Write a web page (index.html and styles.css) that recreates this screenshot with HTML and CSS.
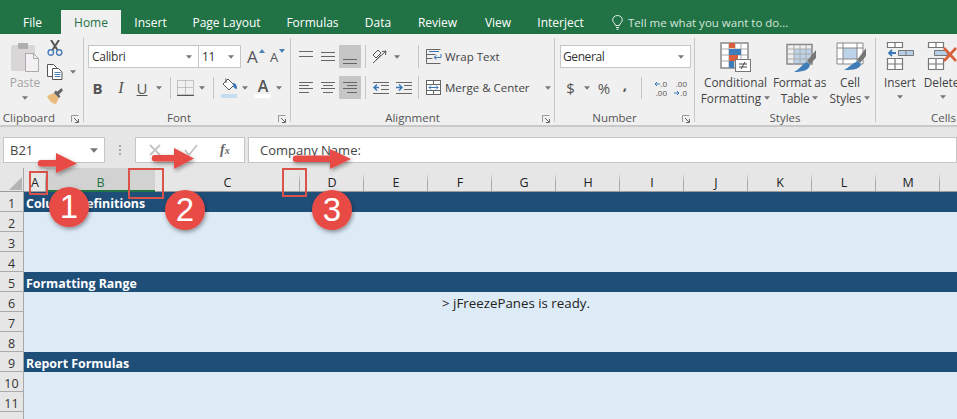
FILE: index.html
```html
<!DOCTYPE html>
<html lang="en">
<head>
<meta charset="utf-8">
<title>Excel</title>
<link rel="stylesheet" href="styles.css">
</head>
<body>
<svg class="defs" width="0" height="0">
  <symbol id="caret" viewBox="0 0 7 4"><path d="M0 0h7L3.500 4z" fill="#777"/></symbol>
  <symbol id="launch" viewBox="0 0 8 8"><path d="M0.500 7V0.500H7.500" fill="none" stroke="#999"/><path d="M3 3l4 4M7.500 4v3.500H4" fill="none" stroke="#666"/></symbol>
</svg>

<header class="titlebar">
  <nav class="tabs">
    <span class="tab t-file">File</span>
    <span class="tab t-home">Home</span>
    <span class="tab t-insert">Insert</span>
    <span class="tab t-page">Page Layout</span>
    <span class="tab t-form">Formulas</span>
    <span class="tab t-data">Data</span>
    <span class="tab t-review">Review</span>
    <span class="tab t-view">View</span>
    <span class="tab t-inter">Interject</span>
    <span class="tell">
      <svg width="11" height="15" viewBox="0 0 11 15"><path d="M3.500 10.500C3 8 .7 7.500 .7 4.800a4.800 4.300 0 0 1 9.600 0C10.300 7.500 8 8 7.500 10.500zM4 12.500h3M4.500 14.300h2" fill="none" stroke="#e4efe8"/></svg>
      <span>Tell me what you want to do...</span>
    </span>
  </nav>
</header>

<section class="ribbon">
  <div class="group g-clip">
    <div class="gbody clip-body">
      <div class="paste">
        <svg width="28" height="30" viewBox="0 0 28 30"><rect x="0" y="3" width="24" height="26" rx="2" fill="#d9d6d7"/><rect x="7" y="1" width="10" height="6" rx="1" fill="#b0adae"/><path d="M14.500 11.500h8l5 5v13h-13z" fill="#f4f1f5" stroke="#aaa"/><path d="M22.500 11.500v5h5" fill="none" stroke="#aaa"/></svg>
        <span class="paste-t">Paste</span>
        <svg class="caret-s" width="6" height="4"><use href="#caret"/></svg>
      </div>
      <div class="clip-tools">
        <svg width="16" height="16" viewBox="0 0 16 16"><path d="M4 0l6.500 10M12 0L5.500 10" stroke="#555" stroke-width="2" fill="none"/><circle cx="3.800" cy="12.500" r="2.700" fill="none" stroke="#4a7eb8" stroke-width="1.400"/><circle cx="12.200" cy="12.500" r="2.700" fill="none" stroke="#4a7eb8" stroke-width="1.400"/></svg>
        <div class="copy-row">
          <svg width="16" height="16" viewBox="0 0 16 16"><path d="M.5 .5h6l3 3v9h-9z" fill="#fff" stroke="#555"/><path d="M5.500 4.500h6l3.500 3.500v7.500H5.500z" fill="#fff" stroke="#555"/><path d="M7.500 8.500h6M7.500 10.500h6M7.500 12.500h6" stroke="#4a7eb8"/></svg>
          <svg width="6" height="4"><use href="#caret"/></svg>
        </div>
        <svg width="17" height="16" viewBox="0 0 17 16"><path d="M0 8l7-3 5 5-3 6C6 16 2 13 0 8z" fill="#e9bb7c"/><path d="M7 5l5 5 1.500-1.500-1.500-2 4-4-1.500-2.500-4 3.500-2-1z" fill="#666"/></svg>
      </div>
    </div>
    <div class="glabel"><i></i><span>Clipboard</span><svg width="8" height="8"><use href="#launch"/></svg></div>
  </div>

  <div class="group g-font">
    <div class="gbody">
      <div class="font-r1">
        <div class="combo c-font"><span class="cal">Calibri</span><svg width="6" height="4"><use href="#caret"/></svg></div>
        <div class="combo c-size"><span class="cal">11</span><svg width="6" height="4"><use href="#caret"/></svg></div>
        <div class="fsize f-grow"><span>A</span><svg width="6" height="4" viewBox="0 0 6 4"><path d="M3 0l3 4H0z" fill="#4a7eb8"/></svg></div>
        <div class="fsize f-shrink"><span>A</span><svg width="6" height="4" viewBox="0 0 6 4"><path d="M0 0h6L3 4z" fill="#4a7eb8"/></svg></div>
      </div>
      <div class="font-r2">
        <b class="fmt b">B</b>
        <i class="fmt i">I</i>
        <u class="fmt u">U</u>
        <svg class="mid" width="6" height="4"><use href="#caret"/></svg>
        <span class="vsep"></span>
        <svg class="mid" width="17" height="16" viewBox="0 0 17 16"><path d="M.5 .5h16v14H.5zM8.500 .5v14M.5 7.500h16" fill="none" stroke="#999" stroke-dasharray="1 1"/><path d="M0 15.500h17" stroke="#555"/></svg>
        <svg class="mid" width="6" height="4"><use href="#caret"/></svg>
        <span class="vsep"></span>
        <svg class="mid" width="17" height="20" viewBox="0 0 17 20"><path d="M7 1l6 6-5 5-6-6z" fill="#fff" stroke="#555"/><path d="M5 0.500V5" stroke="#555"/><path d="M12 5c3 0 4 3 4 6-2 0-3-1-4-3z" fill="#3a78b8"/><rect x="0" y="16" width="16" height="4" fill="#c6dcef"/></svg>
        <svg class="mid" width="6" height="4"><use href="#caret"/></svg>
        <span class="acolor">A</span>
        <svg class="mid" width="6" height="4"><use href="#caret"/></svg>
      </div>
    </div>
    <div class="glabel"><i></i><span>Font</span><svg width="8" height="8"><use href="#launch"/></svg></div>
  </div>

  <div class="group g-align">
    <div class="gbody">
      <div class="al-row al-r1">
        <span class="al"><svg width="14" height="7" viewBox="0 0 14 7" class="up"><path d="M0 .5h14M0 5.500h14" stroke="#666"/></svg></span>
        <span class="al"><svg width="14" height="9" viewBox="0 0 14 9"><path d="M0 .5h14M0 4.500h14M0 8.500h14" stroke="#666"/></svg></span>
        <span class="al sel"><svg width="14" height="9" viewBox="0 0 14 9" class="down"><path d="M0 4.500h14M0 8.500h14" stroke="#666"/></svg></span>
        <span class="alsep"></span>
        <span class="al"><svg width="18" height="17" viewBox="0 0 18 17"><path d="M1 15L14 3M14 3l-4 .5M14 3l-.5 4" fill="none" stroke="#555"/><path d="M1 7l5-5 3 3-5 5zM4 12l5-5" fill="none" stroke="#555"/></svg></span>
        <span class="al al-l"><svg width="6" height="4"><use href="#caret"/></svg></span>
        <span class="alsep"></span>
        <span class="wrap"><svg width="16" height="15" viewBox="0 0 16 15"><path d="M.5 .5h14M.5 5.500h9M.5 9.500h6M.5 14.500h14" stroke="#666"/><path d="M.5 .5v14" stroke="#666"/><path d="M3 2.500h10" stroke="#3a78b8"/><path d="M8 8.500h7V5M8 8.500l2.500-2M8 8.500l2.500 2" fill="none" stroke="#3a78b8"/></svg><span>Wrap Text</span></span>
      </div>
      <div class="al-row al-r2">
        <span class="al"><svg width="14" height="11" viewBox="0 0 14 11"><path d="M0 .5h14M0 3.500h10M0 6.500h14M0 10.500h10" stroke="#666"/></svg></span>
        <span class="al"><svg width="14" height="11" viewBox="0 0 14 11"><path d="M0 .5h14M2 3.500h10M0 6.500h14M2 10.500h10" stroke="#666"/></svg></span>
        <span class="al sel"><svg width="14" height="11" viewBox="0 0 14 11"><path d="M0 .5h14M4 3.500h10M0 6.500h14M4 10.500h10" stroke="#666"/></svg></span>
        <span class="alsep"></span>
        <span class="al"><svg width="16" height="12" viewBox="0 0 16 12"><path d="M0 .5h16M8 3.500h8M8 7.500h8M0 11.500h16" stroke="#666"/><path d="M6 5.500H1M4 2.500L1 5.500 4 8.500" fill="none" stroke="#3a78b8" stroke-width="1.500"/></svg></span>
        <span class="al"><svg width="16" height="12" viewBox="0 0 16 12"><path d="M0 .5h16M8 3.500h8M8 7.500h8M0 11.500h16" stroke="#666"/><path d="M0 5.500h6M3 2.500L6 5.500 3 8.500" fill="none" stroke="#3a78b8" stroke-width="1.500"/></svg></span>
        <span class="alsep"></span>
        <span class="wrap"><svg width="16" height="15" viewBox="0 0 16 15"><rect x=".5" y=".5" width="14" height="14" fill="#fff" stroke="#666"/><path d="M.5 4.500h14M.5 10.500h14M7.500 .5v4M7.500 10.500v4" stroke="#666"/><path d="M3 7.500h9M5 5.500l-2 2 2 2M10 5.500l2 2-2 2" fill="none" stroke="#3a78b8"/></svg><span>Merge &amp; Center</span><svg class="merge-c" width="6" height="4"><use href="#caret"/></svg></span>
      </div>
    </div>
    <div class="glabel"><i></i><span>Alignment</span><svg width="8" height="8"><use href="#launch"/></svg></div>
  </div>

  <div class="group g-num">
    <div class="gbody">
      <div class="combo c-gen"><span>General</span><svg width="6" height="4"><use href="#caret"/></svg></div>
      <div class="num-r2">
        <span class="sym">$</span>
        <svg class="mid" width="6" height="4"><use href="#caret"/></svg>
        <span class="sym">%</span>
        <span class="sym comma">,</span>
        <span class="vsep"></span>
        <span class="dec"><span class="dl"><svg width="6" height="6" viewBox="0 0 6 6"><path d="M6 3H1M3 1L1 3l2 2" fill="none" stroke="#3a78b8"/></svg><span>.0</span></span><span class="dl">.00</span></span>
        <span class="dec"><span class="dl">.00</span><span class="dl"><svg width="6" height="6" viewBox="0 0 6 6"><path d="M0 3h5M3 1l2 2-2 2" fill="none" stroke="#3a78b8"/></svg><span>.0</span></span></span>
      </div>
    </div>
    <div class="glabel"><i></i><span>Number</span><svg width="8" height="8"><use href="#launch"/></svg></div>
  </div>

  <div class="group g-styles">
    <div class="gbody big-row">
      <div class="big b-cond">
        <svg width="32" height="30" viewBox="0 0 32 30">
          <path d="M1 1h27v25H1z" fill="#fff" stroke="#888" stroke-width="1.500"/>
          <path d="M9 1v25M15 1v25M21 1v25M1 7h27M1 13h27M1 19h27" stroke="#aaa"/>
          <rect x="9" y="1" width="6" height="5" fill="#d9603b"/><rect x="9" y="7" width="12" height="6" fill="#3f7cb8"/><rect x="9" y="13" width="9" height="6" fill="#d9603b"/><rect x="9" y="19" width="5" height="7" fill="#3f7cb8"/>
          <rect x="15.500" y="17.500" width="15" height="12" fill="#fff" stroke="#777"/>
          <path d="M19 22h8M19 25h8M25 20l-4 7" stroke="#444"/>
        </svg>
        <span>Conditional</span>
        <span>Formatting <svg width="6" height="4"><use href="#caret"/></svg></span>
      </div>
      <div class="big b-table">
        <svg width="34" height="30" viewBox="0 0 34 30">
          <rect x="11" y="7" width="18" height="15" fill="#bcd2e8"/>
          <path d="M4 2.500h25v19.500H4z" fill="none" stroke="#888" stroke-width="1.500"/>
          <path d="M4 7h25M4 12h25M4 17h25M11 2.500V22M17 2.500V22M23 2.500V22" stroke="#aaa"/>
          <path d="M33 8v8l-6 6-3-3z" fill="#777"/>
          <path d="M24 20l3 3c-1 5-7 7-16 7 5-2 7-7 13-10z" fill="#3f7cb8"/>
        </svg>
        <span>Format as</span>
        <span>Table <svg width="6" height="4"><use href="#caret"/></svg></span>
      </div>
      <div class="big b-cell">
        <svg width="34" height="30" viewBox="0 0 34 30">
          <rect x="4" y="1" width="26" height="21" fill="#fff"/>
          <rect x="10" y="6" width="14" height="11" fill="#bcd2e8"/>
          <path d="M4 1h26v21H4zM4 6h26M4 17h26M10 1v21M24 1v21" fill="none" stroke="#888"/>
          <path d="M33 6v8l-6 7-3-3z" fill="#777"/>
          <path d="M25 19l3 3c-1 5-7 6-17 6 5-2 8-7 14-9z" fill="#3f7cb8"/>
        </svg>
        <span>Cell</span>
        <span>Styles <svg width="6" height="4"><use href="#caret"/></svg></span>
      </div>
    </div>
    <div class="glabel glabel-plain"><span>Styles</span></div>
  </div>

  <div class="group g-cells">
    <div class="gbody big-row">
      <div class="big b-ins">
        <svg width="30" height="30" viewBox="0 0 30 30">
          <path d="M2.500 .5h15v5h-15zM10 .5v5M2.500 16.500h15v11h-15zM2.500 22h15M10 16.500v11" fill="#fff" stroke="#777" stroke-width="1.200"/>
          <path d="M13.500 8.500h15v5h-15zM21 8.500v5" fill="#b7cfe6" stroke="#777"/>
          <path d="M11 11H4M7 8l-3 3 3 3" fill="none" stroke="#3a78b8" stroke-width="1.800"/>
        </svg>
        <span>Insert</span>
        <svg class="caret-s" width="6" height="4"><use href="#caret"/></svg>
      </div>
      <div class="big b-del">
        <svg width="34" height="30" viewBox="0 0 34 30">
          <path d="M1.500 .5h15v5h-15zM9 .5v5M1.500 16.500h15v11h-15zM1.500 22h15M9 16.500v11" fill="#fff" stroke="#777" stroke-width="1.200"/>
          <path d="M7.500 8.500h13v5h-13z" fill="#b7cfe6" stroke="#777"/>
          <path d="M17 6l12 13M29 6L17 19" stroke="#d9603b" stroke-width="2.600"/>
        </svg>
        <span>Delete</span>
        <svg class="caret-s" width="6" height="4"><use href="#caret"/></svg>
      </div>
    </div>
    <div class="glabel glabel-cells"><span>Cells</span></div>
  </div>
</section>

<section class="formula">
  <div class="namebox"><span>B21</span><svg width="8" height="5"><use href="#caret"/></svg></div>
  <div class="dots"><i></i><i></i><i></i></div>
  <div class="fxbox">
    <svg width="14" height="12" viewBox="0 0 14 12"><path d="M2 1l10 10M12 1L2 11" stroke="#c4c4c4" stroke-width="1.800"/></svg>
    <svg width="14" height="12" viewBox="0 0 14 12"><path d="M1 6l4 5 8-10" fill="none" stroke="#c4c4c4" stroke-width="1.800"/></svg>
    <span class="fx">f<small>x</small></span>
  </div>
  <div class="input">Company Name:</div>
</section>

<main class="sheet">
  <div class="colhead">
    <div class="corner"><svg width="13" height="13" viewBox="0 0 13 13"><path d="M13 0v13H0z" fill="#b4b4b4"/></svg></div>
    <div class="ch w-a">A</div>
    <div class="ch w-b on">B</div>
    <div class="ch w-c">C</div>
    <div class="ch">D</div><div class="ch">E</div><div class="ch">F</div><div class="ch">G</div><div class="ch">H</div>
    <div class="ch">I</div><div class="ch">J</div><div class="ch">K</div><div class="ch">L</div><div class="ch">M</div>
  </div>
  <div class="row band"><div class="rh">1</div><div class="cell">Column Definitions</div></div>
  <div class="row"><div class="rh">2</div><div class="cell"></div></div>
  <div class="row"><div class="rh">3</div><div class="cell"></div></div>
  <div class="row"><div class="rh">4</div><div class="cell"></div></div>
  <div class="row band"><div class="rh">5</div><div class="cell">Formatting Range</div></div>
  <div class="row"><div class="rh">6</div><div class="cell center">&gt; jFreezePanes is ready.</div></div>
  <div class="row"><div class="rh">7</div><div class="cell"></div></div>
  <div class="row"><div class="rh">8</div><div class="cell"></div></div>
  <div class="row band"><div class="rh">9</div><div class="cell">Report Formulas</div></div>
  <div class="row"><div class="rh">10</div><div class="cell"></div></div>
  <div class="row"><div class="rh">11</div><div class="cell"></div></div>
  <div class="row"><div class="rh"></div><div class="cell"></div></div>
</main>

<svg class="notes" width="957" height="419" viewBox="0 0 957 419">
  <defs><filter id="sh" x="-30%" y="-30%" width="170%" height="170%"><feDropShadow dx="1" dy="2" stdDeviation="2" flood-color="#000" flood-opacity=".4"/></filter></defs>
  <g fill="none" stroke="#d9534a" stroke-width="2">
    <rect x="30" y="172" width="17" height="22"/>
    <rect x="129" y="169" width="34" height="29"/>
    <rect x="283" y="169" width="23" height="27"/>
  </g>
  <g fill="#e84b45" filter="url(#sh)">
    <path d="M41 160H56V153L77 163.500 56 173V166.500H41a3.200 3.200 0 0 1 0-6.500z"/>
    <path d="M155 155H174V148L194 158.500 174 169V161.500H155a3.200 3.200 0 0 1 0-6.500z"/>
    <path d="M296 155.500H330V149L351 159 330 169V162H296a3.200 3.200 0 0 1 0-6.500z"/>
    <circle cx="69" cy="207" r="20"/>
    <circle cx="185" cy="210" r="20"/>
    <circle cx="332" cy="210" r="20"/>
  </g>
</svg>
<div class="num n1">1</div>
<div class="num n2">2</div>
<div class="num n3">3</div>
</body>
</html>
```
FILE: styles.css
```css
* { box-sizing: border-box; }
html, body { margin: 0; padding: 0; }
body {
  width: 957px; height: 419px; overflow: hidden; position: relative;
  font-family: "Open Sans", "Noto Sans", sans-serif; font-size: 12px; color: #444; background: #ddebf7;
}
svg { display: block; flex: none; }
.defs { position: absolute; }

/* title bar */
.titlebar { height: 34px; background: #217346; padding-top: 10px; }
.tabs { display: grid; height: 24px; grid-template-columns: 61px 60px 59px 93px 79px 52px 67px 54px 71px 1fr; }
.tab { color: #fff; text-align: center; line-height: 25px; font-size: 12px; }
.t-file { padding-left: 4px; }
.t-home { background: #f0f0f0; color: #217346; }
.tell { display: flex; align-items: center; gap: 5px; padding-left: 16px; color: #d6e6dc; font-size: 11.500px; }

/* ribbon */
.ribbon { display: flex; height: 93px; padding-top: 4px; background: #f0f0f0; border-bottom: 2px solid #c9c9c9; overflow: hidden; }
.group { height: 84px; flex: none; border-right: 1px solid #c6c6c6; display: flex; flex-direction: column; }
.g-clip { width: 84px; }
.g-font { width: 207px; padding-left: 4px; }
.g-align { width: 264px; }
.g-num { width: 140px; }
.g-styles { width: 181px; }
.g-cells { width: 81px; border-right: 0; }
.gbody { height: 72px; flex: none; }
.glabel { height: 12px; flex: none; margin-top: 2px; font-size: 11.500px; line-height: 12px; color: #555; display: grid; grid-template-columns: 1fr auto 1fr; align-items: center; padding-right: 4px; }
.glabel span { white-space: nowrap; margin-right: 16px; }
.glabel svg { justify-self: end; margin-top: 1px; }
.glabel i { display: block; }
.glabel-plain { grid-template-columns: 1fr; justify-items: center; padding-right: 0; }
.glabel-plain span { margin-right: 0; }
.glabel-cells { grid-template-columns: 1fr; justify-items: start; padding-left: 55px; }

/* clipboard */
.clip-body { display: flex; }
.paste { width: 47px; padding-left: 3px; padding-top: 4px; display: flex; flex-direction: column; align-items: center; }
.paste-t { line-height: 16px; margin-top: 3px; color: #a3a3a3; font-size: 12px; }
.caret-s { margin-top: 5px; }
.clip-tools { display: flex; flex-direction: column; gap: 8px; padding-top: 2px; }
.copy-row { display: flex; align-items: center; gap: 7px; height: 16px; }

/* font */
.font-r1 { display: flex; align-items: center; margin-top: 7px; height: 23px; }
.combo { display: flex; align-items: center; justify-content: space-between; height: 23px; background: #fff; border: 1px solid #c6c6c6; padding: 0 6px 0 3px; color: #333; }
.cal { font-size: 12px; letter-spacing: -.3px; }
.c-font { width: 111px; }
.c-size { width: 43px; margin-left: -1px; }
.fsize { display: flex; align-items: flex-start; height: 23px; color: #555; font-size: 17px; line-height: 23px; }
.fsize svg { margin-top: 4px; margin-left: 1px; }
.f-grow { margin-left: 6px; width: 21px; }
.f-shrink { margin-left: 2px; font-size: 13px; line-height: 25px; }
.font-r2 { display: grid; grid-template-columns: 19px 28px 14px 20px 3px 26px 8px 14px 18px 14px 22px 10px; height: 20px; margin-top: 9px; align-items: center; justify-items: center; }
.fmt { font-size: 15px; line-height: 20px; color: #555; }
.fmt.i { font-family: "Liberation Serif", serif; font-size: 16px; }
.vsep { width: 1px; height: 22px; background: #c6c6c6; }
.acolor { font-size: 16px; font-weight: 600; color: #555; line-height: 16px; width: 16px; text-align: center; background: linear-gradient(#f0f0f0 16px, #fff 16px); height: 20px; }

/* alignment */
.al-row { display: grid; grid-template-columns: 22px 22px 22px 8px 23px 23px 6px 1fr; align-items: center; margin-left: 4px; }
.al-r1 { margin-top: 7px; height: 23px; }
.al-r2 { margin-top: 8px; height: 23px; }
.al { height: 23px; display: flex; align-items: center; justify-content: center; }
.al-l { justify-content: flex-start; padding-left: 2px; }
.al.sel { background: #c6c6c6; }
.up { margin-bottom: 5px; }
.down { margin-top: 6px; }
.alsep { width: 1px; height: 23px; background: #c6c6c6; justify-self: center; }
.wrap { display: flex; align-items: center; gap: 3px; padding-left: 5px; white-space: nowrap; color: #444; font-size: 11.500px; }
.merge-c { margin-left: 12px; }

/* number */
.c-gen { width: 131px; margin: 7px 0 0 5px; padding-left: 2px; letter-spacing: -.4px; }
.num-r2 { display: grid; grid-template-columns: 21px 11px 24px 18px 14px 22px 18px; margin: 8px 0 0 5px; height: 23px; align-items: center; justify-items: center; }
.sym { font-size: 15px; color: #555; line-height: 23px; }
.comma { font-weight: 700; line-height: 16px; margin-bottom: 8px; }
.dec { display: flex; flex-direction: column; gap: 1px; font-size: 8px; line-height: 8px; color: #555; width: 16px; }
.dl { display: flex; align-items: center; justify-content: flex-end; }

/* styles + cells */
.big-row { display: flex; }
.big { display: flex; flex-direction: column; align-items: center; padding-top: 4px; line-height: 16px; white-space: nowrap; color: #444; font-size: 11.800px; }
.big svg:first-child { margin-bottom: 2px; }
.big span svg { display: inline-block; vertical-align: 1px; }
.b-cond { width: 67px; margin-left: 7px; }
.b-table { width: 59px; margin-left: 1px; letter-spacing: -.2px; }
.b-cell { width: 40px; margin-left: 1px; }
.b-ins { width: 33px; margin-left: 8px; }
.b-del { width: 40px; margin-left: 8px; align-items: flex-start; }
.b-del .caret-s { margin-left: 16px; }
.b-del svg:first-child { margin-left: 3px; }

/* formula bar */
.formula { height: 41px; display: flex; padding: 10px 0 5px 3px; background: #e6e6e6; }
.namebox, .fxbox, .input { height: 26px; background: #fff; border: 1px solid #c6c6c6; display: flex; align-items: center; color: #444; font-size: 13px; }
.namebox { width: 102px; justify-content: space-between; padding: 0 6px; }
.dots { width: 30px; display: flex; flex-direction: column; align-items: center; justify-content: center; gap: 2px; }
.dots i { width: 2px; height: 2px; background: #aaa; }
.fxbox { width: 110px; padding-left: 12px; gap: 22px; }
.fx { font-family: "Liberation Serif", serif; font-style: italic; font-weight: 700; font-size: 14px; color: #666; }
.fx small { font-size: 10px; }
.input { flex: 1; margin-left: 3px; padding-left: 11px; }

/* sheet */
.colhead { display: flex; height: 24px; background: #e6e6e6; border-bottom: 1px solid #9d9d9d; }
.corner { width: 24px; flex: none; padding: 9px 0 0 9px; border-right: 1px solid #a8a8a8; }
.ch { width: 64px; flex: none; text-align: center; line-height: 23px; color: #222; font-size: 12.500px; padding-top: 3px;
  background: linear-gradient(#e6e6e6 4px, #aaa 14px) right top / 1px 100% no-repeat; }
.w-a { width: 22px; }
.w-b { width: 109px; }
.w-c { width: 145px; }
.on { background: #d2d2d2; box-shadow: inset 0 -2px 0 #217346; color: #217346; margin-bottom: -1px; }
.row { display: flex; height: 20px; }
.rh { width: 24px; flex: none; background: #e6e6e6; border-right: 1px solid #a8a8a8; border-bottom: 1px solid #aaa; text-align: center; line-height: 23px; color: #333; font-size: 12.500px; }
.cell { flex: 1; background: #ddebf7; color: #222; padding-left: 2px; line-height: 23px; font-size: 12.400px; }
.center { text-align: center; padding-left: 51px; font-size: 13.300px; line-height: 22px; }
.band .cell { background: #1f4e79; color: #fff; font-weight: 700; }

/* annotations */
.notes { position: absolute; left: 0; top: 0; pointer-events: none; }
.num { position: absolute; width: 40px; text-align: center; color: #fff; font-family: "Liberation Sans", sans-serif; font-size: 33px; line-height: 40px; }
.n1 { left: 49px; top: 187px; }
.n2 { left: 165px; top: 190px; }
.n3 { left: 312px; top: 190px; }
```
